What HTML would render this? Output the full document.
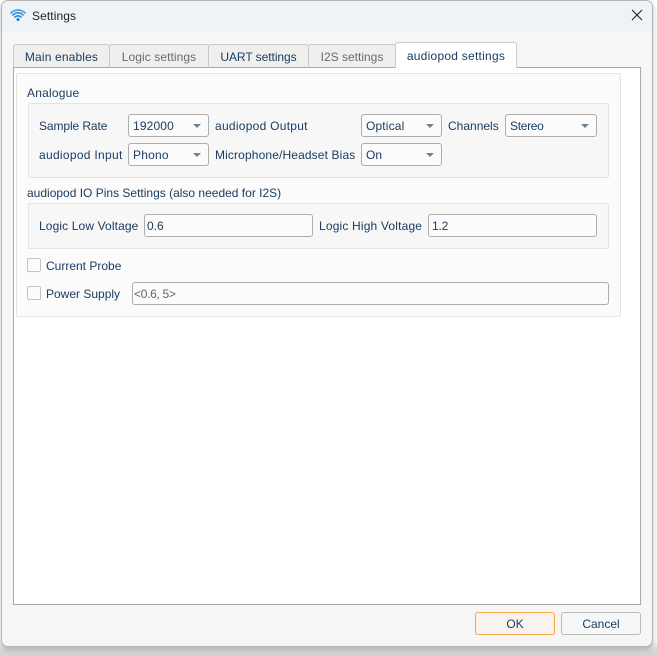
<!DOCTYPE html>
<html><head><meta charset="utf-8"><style>
html,body{margin:0;padding:0;width:657px;height:655px;overflow:hidden;background:#fff;font-family:"Liberation Sans",sans-serif;font-size:12px;color:#1a3d61}
div{position:absolute;box-sizing:border-box}
.t{white-space:nowrap;line-height:16px;height:16px}
.tab{top:44px;height:24px;background:#efefee;border:1px solid #c9c9c9;border-bottom:1px solid #a8a8a8;border-radius:3px 3px 0 0;text-align:center;line-height:24px;white-space:nowrap}
.box{background:#f7f7f7;border:1px solid #e4e4e4;border-radius:2px}
.c{background:#fbfbfb;border:1px solid #adadad;border-radius:3px;height:23px;line-height:22px;padding-left:4px;white-space:nowrap}
.c:after{content:"";position:absolute;right:7px;top:9px;border-left:4px solid transparent;border-right:4px solid transparent;border-top:4px solid #6c8397}
.e{background:#fbfbfb;border:1px solid #adadad;border-radius:3px;height:23px;line-height:22px;padding-left:2px;white-space:nowrap}
.k{left:27px;width:14px;height:14px;background:#fbfbfb;border:1px solid #c4c4c4;border-radius:2px}
.b{top:612px;width:80px;height:23px;border-radius:3px;text-align:center;line-height:22px}
</style></head><body>
<div style="left:0;top:0;width:657px;height:655px;background:linear-gradient(#fff 640px,#d8d8d8 650px,#d2d2d2 655px)"></div>
<div style="left:1px;top:0;width:652px;height:647px;background:#f6f6f5;border:1px solid #b5b5b5;border-radius:7px;box-shadow:0 2px 6px rgba(0,0,0,.25)"></div>
<div style="left:2px;top:1px;width:650px;height:30px;background:#eef3f8;border-radius:6px 6px 0 0"></div>
<svg style="position:absolute;left:9px;top:8px" width="18" height="14" viewBox="0 0 18 14" fill="none" stroke-linecap="round"><path d="M2 5C6 1 12 1 16 5" stroke="#4a9fdc" stroke-width="1.8"/><path d="M4 7C7 4 11 4 14 7" stroke="#3f93d6" stroke-width="1.8"/><path d="M6 9C8 7.500 10 7.500 12 9" stroke="#3585c8" stroke-width="1.700"/><circle cx="9" cy="11.500" r="1.500" fill="#2b74b8"/></svg>
<div class="t" style="left:32px;top:8px;color:#222;letter-spacing:.1px">Settings</div>
<svg style="position:absolute;left:631px;top:9px" width="12" height="12" viewBox="0 0 12 12"><path d="M1 1L11 11M11 1L1 11" stroke="#222" stroke-width="1.100" fill="none"/></svg>

<div style="left:13px;top:67px;width:628px;height:538px;background:#fff;border:1px solid #a8a8a8"></div>
<div class="tab" style="left:13px;width:97px;letter-spacing:.15px">Main enables</div>
<div class="tab" style="left:109px;width:100px;color:#6a6a6a;letter-spacing:.08px">Logic settings</div>
<div class="tab" style="left:208px;width:101px;letter-spacing:-.05px">UART settings</div>
<div class="tab" style="left:308px;width:88px;color:#6a6a6a">I2S settings</div>
<div class="tab" style="left:395px;top:42px;width:122px;height:26px;background:#fff;border-bottom:1px solid #fff;line-height:26px;letter-spacing:.25px">audiopod settings</div>

<div style="left:16px;top:73px;width:605px;height:244px;background:#fbfbfb;border:1px solid #e4e4e4;border-radius:2px"></div>
<div class="t" style="left:27px;top:85px;letter-spacing:.2px">Analogue</div>
<div class="box" style="left:28px;top:103px;width:581px;height:75px"></div>
<div class="t" style="left:39px;top:118px;letter-spacing:-.1px">Sample Rate</div>
<div class="c" style="left:128px;top:114px;width:81px;letter-spacing:.15px">192000</div>
<div class="t" style="left:215px;top:118px;letter-spacing:.27px">audiopod Output</div>
<div class="c" style="left:361px;top:114px;width:81px;letter-spacing:.15px">Optical</div>
<div class="t" style="left:448px;top:118px">Channels</div>
<div class="c" style="left:505px;top:114px;width:92px;letter-spacing:-.3px">Stereo</div>
<div class="t" style="left:39px;top:147px;letter-spacing:.3px">audiopod Input</div>
<div class="c" style="left:128px;top:143px;width:81px;letter-spacing:.2px">Phono</div>
<div class="t" style="left:215px;top:147px;letter-spacing:.13px">Microphone/Headset Bias</div>
<div class="c" style="left:361px;top:143px;width:81px">On</div>

<div class="t" style="left:27px;top:185px">audiopod IO Pins Settings (also needed for I2S)</div>
<div class="box" style="left:28px;top:203px;width:581px;height:46px"></div>
<div class="t" style="left:39px;top:218px;letter-spacing:.12px">Logic Low Voltage</div>
<div class="e" style="left:144px;top:214px;width:169px">0.6</div>
<div class="t" style="left:319px;top:218px;letter-spacing:.17px">Logic High Voltage</div>
<div class="e" style="left:428px;top:214px;width:169px;padding-left:3px;letter-spacing:-.2px">1.2</div>

<div class="k" style="top:258px"></div>
<div class="t" style="left:46px;top:258px">Current Probe</div>
<div class="k" style="top:286px"></div>
<div class="t" style="left:46px;top:286px">Power Supply</div>
<div class="e" style="left:132px;top:282px;width:477px;color:#666;padding-left:1px;letter-spacing:-.3px">&lt;0.6, 5&gt;</div>

<div class="b" style="left:475px;background:#f8f3ef;border:1px solid #f5a94f">OK</div>
<div class="b" style="left:561px;background:#f6f7f8;border:1px solid #b9b9b9">Cancel</div>
</body></html>
